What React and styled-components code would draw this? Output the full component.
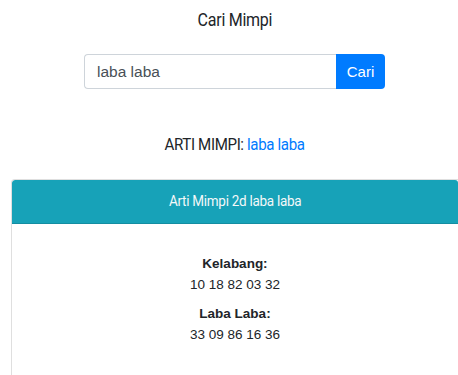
import styled, { createGlobalStyle } from 'styled-components';

const GlobalStyle = createGlobalStyle`
	body {
		margin: 0;
		background: #fff;
		color: #212529;
		font-family: 'Liberation Sans', Arial, sans-serif;
	}
`;

const Page = styled.div`
	display: flex;
	flex-direction: column;
	align-items: center;
	box-sizing: border-box;
	height: 375px;
	padding: 9px 0 0 11px;

	& > * {
		flex-shrink: 0;
	}
`;

// condensed heading face: Roboto squeezed horizontally
const Condensed = styled.span`
	display: inline-block;
	transform: scaleX(${(p) => p.$scale});
	white-space: nowrap;
`;

const Title = styled.h1`
	margin: 0;
	font-family: 'Roboto', sans-serif;
	font-weight: 400;
	font-size: 18px;
	line-height: 22px;
	letter-spacing: -0.3px;
	color: #212529;
`;

const SearchForm = styled.form`
	display: flex;
	width: 301px;
	height: 35px;
	margin-top: 23px;
`;

const SearchInput = styled.input`
	flex: 1;
	min-width: 0;
	box-sizing: border-box;
	height: 100%;
	padding: 0 12px;
	border: 1px solid #ced4da;
	border-right: none;
	border-radius: 4px 0 0 4px;
	font-family: 'Liberation Sans', Arial, sans-serif;
	font-size: 15.5px;
	color: #495057;
	outline: none;
`;

const SearchButton = styled.button`
	width: 49px;
	height: 100%;
	border: none;
	border-radius: 0 4px 4px 0;
	background: #007bff;
	color: #fff;
	font-family: 'Liberation Sans', Arial, sans-serif;
	font-size: 15px;
	padding: 0;
`;

const ResultTitle = styled.h2`
	margin: 46px 0 0;
	font-family: 'Roboto', sans-serif;
	font-weight: 400;
	font-size: 16.5px;
	line-height: 20px;
	letter-spacing: -0.4px;
	color: #212529;

	& em {
		font-style: normal;
		color: #007bff;
	}
`;

const Card = styled.div`
	align-self: stretch;
	flex: 1 0 0;
	margin-top: 24px;
	border: 1px solid rgba(0, 0, 0, 0.125);
	border-right: none;
	border-bottom: none;
	border-radius: 4px 0 0 0;
	overflow: hidden;
`;

const CardHeader = styled.div`
	background: #17a2b8;
	border-bottom: 1px solid rgba(0, 0, 0, 0.125);
	height: 43px;
	display: flex;
	align-items: center;
	justify-content: center;
	font-family: 'Roboto', sans-serif;
	font-size: 14.5px;
	letter-spacing: -0.3px;
	color: #f4f8f9;
	border-radius: 3px 3px 0 0;
`;

const CardBody = styled.div`
	padding: 29px 0 0;
	display: flex;
	flex-direction: column;
	align-items: center;
	font-size: 13.5px;
	line-height: 21px;
`;

const Entry = styled.div`
	text-align: center;
	margin-bottom: 8px;
`;

const EntryName = styled.div`
	font-weight: 700;
`;

const entries = [
	{ name: 'Kelabang:', numbers: '10 18 82 03 32' },
	{ name: 'Laba Laba:', numbers: '33 09 86 16 36' },
];

export default function App() {
	return (
		<Page>
			<GlobalStyle />
			<Title>
				<Condensed $scale={0.89}>Cari Mimpi</Condensed>
			</Title>
			<SearchForm onSubmit={(e) => e.preventDefault()}>
				<SearchInput defaultValue="laba laba" />
				<SearchButton type="submit">Cari</SearchButton>
			</SearchForm>
			<ResultTitle>
				<Condensed $scale={0.915}>
					ARTI MIMPI: <em>laba laba</em>
				</Condensed>
			</ResultTitle>
			<Card>
				<CardHeader>
					<Condensed $scale={0.93}>Arti Mimpi 2d laba laba</Condensed>
				</CardHeader>
				<CardBody>
					{entries.map((entry) => (
						<Entry key={entry.name}>
							<EntryName>{entry.name}</EntryName>
							<div>{entry.numbers}</div>
						</Entry>
					))}
				</CardBody>
			</Card>
		</Page>
	);
}
